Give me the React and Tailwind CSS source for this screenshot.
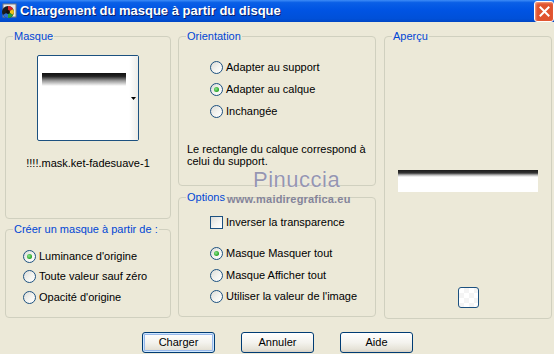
import React from "react";

const font = { fontFamily: '"Liberation Sans", Arial, sans-serif' };

function Radio({ checked, label }) {
  return (
    <div className="flex items-center h-full">
      <span className="relative w-[13px] h-[13px] rounded-full border border-[#1C5180] bg-[linear-gradient(135deg,#dcdcd7_0%,#f4f4f0_55%,#ffffff_100%)] flex items-center justify-center shrink-0">
        {checked && (
          <span className="w-[5px] h-[5px] rounded-full bg-[radial-gradient(circle_at_40%_40%,#8ee68e_0%,#21a121_70%)]" />
        )}
      </span>
      <span className="ml-[3px] text-[11px] leading-[13px] text-black whitespace-nowrap">
        {label}
      </span>
    </div>
  );
}

function Checkbox({ label }) {
  return (
    <div className="flex items-center h-full">
      <span className="w-[13px] h-[13px] border border-[#1C5180] bg-[linear-gradient(135deg,#dcdcd7_0%,#f4f4f0_55%,#ffffff_100%)] shrink-0" />
      <span className="ml-[3px] text-[11px] leading-[13px] text-black whitespace-nowrap">
        {label}
      </span>
    </div>
  );
}

function Group({ title, className, children }) {
  return (
    <fieldset
      className={`border border-[#D0D0BF] rounded-[4px] px-0 pb-0 ${className}`}
    >
      <legend className="ml-[7px] px-[1px] text-[11px] leading-[13px] text-[#0046D5]">
        {title}
      </legend>
      {children}
    </fieldset>
  );
}

function Button({ label, isDefault }) {
  return (
    <button
      className={`w-[73px] h-[21px] rounded-[3px] border border-[#003C74] bg-[linear-gradient(to_bottom,#ffffff_0%,#f4f3ee_50%,#e6e3d8_85%,#d6d0c5_100%)] text-[11px] leading-[13px] text-black ${
        isDefault ? "shadow-[inset_0_0_0_1px_#cee7ff,inset_0_0_0_2px_#98b8ea]" : ""
      }`}
    >
      {label}
    </button>
  );
}

export default function App() {
  return (
    <div
      className="relative w-[554px] h-[354px] overflow-hidden bg-[#ECE9D8]"
      style={font}
    >
      {/* Title bar */}
      <div className="h-[22px] flex items-center bg-[linear-gradient(to_bottom,#3d8cf7_0%,#0a5fe6_12%,#0054e3_45%,#0050d8_85%,#0046c4_100%)]">
        <svg width="16" height="16" viewBox="0 0 16 16" className="ml-[1px]">
          <rect x="2" y="1" width="13" height="13" fill="#e8e8e8" stroke="#7a7a7a" />
          <circle cx="7" cy="9" r="6" fill="#1b1b1b" />
          <path d="M7 9 L7 3 A6 6 0 0 1 12.2 6 Z" fill="#d8262a" />
          <path d="M7 9 L12.2 6 A6 6 0 0 1 12.2 12 Z" fill="#f2c21a" />
          <path d="M7 9 L12.2 12 A6 6 0 0 1 7 15 Z" fill="#2aa43a" />
          <path d="M7 9 L7 15 A6 6 0 0 1 1.8 12 Z" fill="#2a6fd8" />
          <circle cx="7" cy="9" r="2" fill="#111" />
        </svg>
        <span className="ml-[3px] text-[13px] font-bold text-white [text-shadow:1px_1px_0_#0a1e6a] whitespace-nowrap">
          Chargement du masque à partir du disque
        </span>
        <div className="ml-auto w-[20px] h-[21px] rounded-[3px] border border-white bg-[#e0532f] shadow-[inset_1px_1px_2px_#f5a58a] flex items-center justify-center">
          <svg width="11" height="11" viewBox="0 0 11 11">
            <path d="M1.5 1.5 L9.5 9.5 M9.5 1.5 L1.5 9.5" stroke="#fff" strokeWidth="2" strokeLinecap="square" />
          </svg>
        </div>
      </div>

      {/* Body */}
      <div className="pt-[8px] flex flex-col">
        <div className="flex">
          {/* Left column */}
          <div className="ml-[5px] w-[166px] flex flex-col">
            <Group title="Masque" className="h-[189px]">
              <div className="flex flex-col items-center">
                <div className="mt-[12px] w-[102px] h-[86px] rounded-[2px] border border-[#1C5180] bg-white flex">
                  <div className="flex-1 pl-[4px] pt-[17px]">
                    <div className="w-[84px] h-[13px] bg-[linear-gradient(to_bottom,#111_0%,#222_25%,#9a9a9a_60%,#fff_100%)]" />
                  </div>
                  <div className="w-[9px] bg-[linear-gradient(to_right,#ffffff,#ecece8)] flex items-center justify-center">
                    <svg width="5" height="3" viewBox="0 0 5 3">
                      <path d="M0 0 H5 L2.5 3 Z" fill="#000" />
                    </svg>
                  </div>
                </div>
                <div className="mt-[16px] text-[11px] leading-[13px] text-black whitespace-nowrap">
                  !!!!.mask.ket-fadesuave-1
                </div>
              </div>
            </Group>
            <Group title="Créer un masque à partir de :" className="mt-[4px] h-[95px]">
              <div className="mt-[10px] pl-[17px] flex flex-col">
                <div className="h-[20.5px]"><Radio checked label="Luminance d'origine" /></div>
                <div className="h-[20.5px]"><Radio label="Toute valeur sauf zéro" /></div>
                <div className="h-[20.5px]"><Radio label="Opacité d'origine" /></div>
              </div>
            </Group>
          </div>

          {/* Middle column */}
          <div className="ml-[7px] w-[198px] flex flex-col">
            <Group title="Orientation" className="h-[156px]">
              <div className="mt-[13px] pl-[31px] flex flex-col">
                <div className="h-[22px]"><Radio label="Adapter au support" /></div>
                <div className="h-[22px]"><Radio checked label="Adapter au calque" /></div>
                <div className="h-[22px]"><Radio label="Inchangée" /></div>
              </div>
              <p className="mt-[21px] pl-[8px] text-[11px] leading-[12px] text-black">
                Le rectangle du calque correspond à
                <br />
                celui du support.
              </p>
            </Group>
            <Group title="Options" className="mt-[5px] h-[126px]">
              <div className="mt-[7px] pl-[31px] flex flex-col">
                <div className="h-[22px]"><Checkbox label="Inverser la transparence" /></div>
                <div className="mt-[10px] h-[21.5px]"><Radio checked label="Masque Masquer tout" /></div>
                <div className="h-[21.5px]"><Radio label="Masque Afficher tout" /></div>
                <div className="h-[21.5px]"><Radio label="Utiliser la valeur de l'image" /></div>
              </div>
            </Group>
          </div>

          {/* Right column */}
          <div className="ml-[8px] w-[168px] flex flex-col">
            <Group title="Aperçu" className="h-[289px]">
              <div className="flex flex-col items-center">
                <div className="mt-[127px] w-[140px] h-[22px] bg-[linear-gradient(to_bottom,#1a1a1a_0px,#333_3px,#b5b5b5_5px,#ffffff_7px,#ffffff_100%)]" />
                <div className="mt-[95px] w-[21px] h-[21px] rounded-[3px] border border-[#1C5180] bg-[conic-gradient(#f4f4f4_25%,#ffffff_0_50%,#f4f4f4_0_75%,#ffffff_0)] bg-[length:10px_10px]" />
              </div>
            </Group>
          </div>
        </div>

        {/* Buttons */}
        <div className="mt-[13px] pl-[142px] flex gap-[26px]">
          <Button label="Charger" isDefault />
          <Button label="Annuler" />
          <Button label="Aide" />
        </div>
      </div>

      {/* Watermark */}
      <div className="absolute left-[253px] top-[168px] text-[22px] leading-[24px] text-[#9696b0] tracking-[0.5px] [text-shadow:0_0_1px_#ffffff] pointer-events-none">
        Pinuccia
      </div>
      <div className="absolute left-[227px] top-[193px] text-[11px] font-bold leading-[13px] text-[#84849a] tracking-[0.2px] pointer-events-none">
        www.maidiregrafica.eu
      </div>
    </div>
  );
}
